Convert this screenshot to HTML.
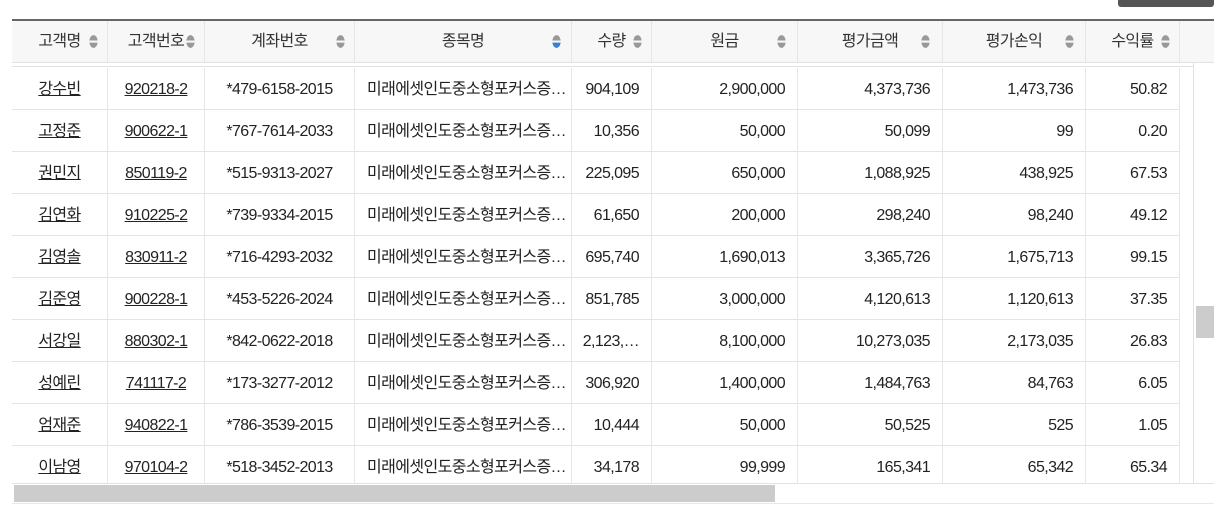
<!DOCTYPE html>
<html><head><meta charset="utf-8"><style>
*{margin:0;padding:0;box-sizing:border-box}
body{width:1224px;height:521px;background:#fff;font-family:"Liberation Sans","Noto Sans CJK KR",sans-serif;color:#222;position:relative;overflow:hidden;font-size:16px;letter-spacing:-0.6px}
.btn{position:absolute;left:1118px;top:-4px;width:96px;height:11px;background:#555;border-radius:3px}
.top{position:absolute;left:12px;top:19px;width:1202px;height:2px;background:#666}
.hdr{position:absolute;left:12px;top:21px;width:1202px;height:42px;background:#f7f7f7;border-bottom:1px solid #e2e2e2}
.hc{position:absolute;top:0;height:41px;line-height:42px;text-align:center;border-right:1px solid #e6e6e6;color:#333}
.ic{position:absolute;top:12px;width:9px;height:17px}
.sep{position:absolute;left:12px;top:66px;width:1182px;height:1px;background:#e2e2e2}
.row{position:absolute;left:12px;width:1168px;height:42px;border-bottom:1px solid #e4e4e4}
.c{position:absolute;top:0;height:41px;line-height:43px;border-right:1px solid #e6e6e6;white-space:nowrap;overflow:hidden}
.u{text-decoration:underline;text-align:center}
.ctr{text-align:center}
.l{padding-left:12px;text-overflow:ellipsis}
.r{text-align:right;padding-right:12px}
.vs{position:absolute;left:1193px;top:63px;width:21px;height:420px;border-left:1px solid #e2e2e2}
.vt{position:absolute;left:1196px;top:306px;width:18px;height:32px;background:#ccc}
.hs{position:absolute;left:12px;top:483px;width:1202px;height:21px;border-top:1px solid #e2e2e2;border-bottom:1px solid #e8e8e8}
.ht{position:absolute;left:14px;top:485px;width:761px;height:17px;background:#ccc}
.clip{position:absolute;left:0;top:67px;width:1224px;height:416px;overflow:hidden}
</style></head><body>
<div class="btn"></div>
<div class="top"></div>
<div class="hdr">
<div class="hc" style="left:0;width:96px">고객명</div>
<div class="hc" style="left:96px;width:97px">고객번호</div>
<div class="hc" style="left:193px;width:150px">계좌번호</div>
<div class="hc" style="left:343px;width:217px">종목명</div>
<div class="hc" style="left:560px;width:80px">수량</div>
<div class="hc" style="left:640px;width:146px">원금</div>
<div class="hc" style="left:786px;width:145px">평가금액</div>
<div class="hc" style="left:931px;width:143px">평가손익</div>
<div class="hc" style="left:1074px;width:94px">수익률</div>
<svg class="ic" style="left:77px" viewBox="0 0 8 16"><path d="M0 7L1 4Q4 0 7 4L8 7Z" fill="#999"/><path d="M0 9L8 9L7 12Q4 16 1 12Z" fill="#999"/></svg>
<svg class="ic" style="left:174px" viewBox="0 0 8 16"><path d="M0 7L1 4Q4 0 7 4L8 7Z" fill="#999"/><path d="M0 9L8 9L7 12Q4 16 1 12Z" fill="#999"/></svg>
<svg class="ic" style="left:324px" viewBox="0 0 8 16"><path d="M0 7L1 4Q4 0 7 4L8 7Z" fill="#999"/><path d="M0 9L8 9L7 12Q4 16 1 12Z" fill="#999"/></svg>
<svg class="ic" style="left:540px" viewBox="0 0 8 16"><path d="M0 7L1 4Q4 0 7 4L8 7Z" fill="#999"/><path d="M0 9L8 9L7 12Q4 16 1 12Z" fill="#3a7fd5"/></svg>
<svg class="ic" style="left:621px" viewBox="0 0 8 16"><path d="M0 7L1 4Q4 0 7 4L8 7Z" fill="#999"/><path d="M0 9L8 9L7 12Q4 16 1 12Z" fill="#999"/></svg>
<svg class="ic" style="left:765px" viewBox="0 0 8 16"><path d="M0 7L1 4Q4 0 7 4L8 7Z" fill="#999"/><path d="M0 9L8 9L7 12Q4 16 1 12Z" fill="#999"/></svg>
<svg class="ic" style="left:909px" viewBox="0 0 8 16"><path d="M0 7L1 4Q4 0 7 4L8 7Z" fill="#999"/><path d="M0 9L8 9L7 12Q4 16 1 12Z" fill="#999"/></svg>
<svg class="ic" style="left:1053px" viewBox="0 0 8 16"><path d="M0 7L1 4Q4 0 7 4L8 7Z" fill="#999"/><path d="M0 9L8 9L7 12Q4 16 1 12Z" fill="#999"/></svg>
<svg class="ic" style="left:1149px" viewBox="0 0 8 16"><path d="M0 7L1 4Q4 0 7 4L8 7Z" fill="#999"/><path d="M0 9L8 9L7 12Q4 16 1 12Z" fill="#999"/></svg>
</div>
<div class="sep"></div>
<div class="vs"></div><div class="vt"></div>
<div class="hs"></div><div class="ht"></div>
<div class="clip">
<div class="row" style="top:1px"><div class="c u" style="left:0;width:96px">강수빈</div><div class="c u" style="left:96px;width:97px">920218-2</div><div class="c ctr" style="left:193px;width:150px">*479-6158-2015</div><div class="c l" style="left:343px;width:217px">미래에셋인도중소형포커스증…</div><div class="c r" style="left:560px;width:80px">904,109</div><div class="c r" style="left:640px;width:146px">2,900,000</div><div class="c r" style="left:786px;width:145px">4,373,736</div><div class="c r" style="left:931px;width:143px">1,473,736</div><div class="c r" style="left:1074px;width:94px">50.82</div></div>
<div class="row" style="top:43px"><div class="c u" style="left:0;width:96px">고정준</div><div class="c u" style="left:96px;width:97px">900622-1</div><div class="c ctr" style="left:193px;width:150px">*767-7614-2033</div><div class="c l" style="left:343px;width:217px">미래에셋인도중소형포커스증…</div><div class="c r" style="left:560px;width:80px">10,356</div><div class="c r" style="left:640px;width:146px">50,000</div><div class="c r" style="left:786px;width:145px">50,099</div><div class="c r" style="left:931px;width:143px">99</div><div class="c r" style="left:1074px;width:94px">0.20</div></div>
<div class="row" style="top:85px"><div class="c u" style="left:0;width:96px">권민지</div><div class="c u" style="left:96px;width:97px">850119-2</div><div class="c ctr" style="left:193px;width:150px">*515-9313-2027</div><div class="c l" style="left:343px;width:217px">미래에셋인도중소형포커스증…</div><div class="c r" style="left:560px;width:80px">225,095</div><div class="c r" style="left:640px;width:146px">650,000</div><div class="c r" style="left:786px;width:145px">1,088,925</div><div class="c r" style="left:931px;width:143px">438,925</div><div class="c r" style="left:1074px;width:94px">67.53</div></div>
<div class="row" style="top:127px"><div class="c u" style="left:0;width:96px">김연화</div><div class="c u" style="left:96px;width:97px">910225-2</div><div class="c ctr" style="left:193px;width:150px">*739-9334-2015</div><div class="c l" style="left:343px;width:217px">미래에셋인도중소형포커스증…</div><div class="c r" style="left:560px;width:80px">61,650</div><div class="c r" style="left:640px;width:146px">200,000</div><div class="c r" style="left:786px;width:145px">298,240</div><div class="c r" style="left:931px;width:143px">98,240</div><div class="c r" style="left:1074px;width:94px">49.12</div></div>
<div class="row" style="top:169px"><div class="c u" style="left:0;width:96px">김영솔</div><div class="c u" style="left:96px;width:97px">830911-2</div><div class="c ctr" style="left:193px;width:150px">*716-4293-2032</div><div class="c l" style="left:343px;width:217px">미래에셋인도중소형포커스증…</div><div class="c r" style="left:560px;width:80px">695,740</div><div class="c r" style="left:640px;width:146px">1,690,013</div><div class="c r" style="left:786px;width:145px">3,365,726</div><div class="c r" style="left:931px;width:143px">1,675,713</div><div class="c r" style="left:1074px;width:94px">99.15</div></div>
<div class="row" style="top:211px"><div class="c u" style="left:0;width:96px">김준영</div><div class="c u" style="left:96px;width:97px">900228-1</div><div class="c ctr" style="left:193px;width:150px">*453-5226-2024</div><div class="c l" style="left:343px;width:217px">미래에셋인도중소형포커스증…</div><div class="c r" style="left:560px;width:80px">851,785</div><div class="c r" style="left:640px;width:146px">3,000,000</div><div class="c r" style="left:786px;width:145px">4,120,613</div><div class="c r" style="left:931px;width:143px">1,120,613</div><div class="c r" style="left:1074px;width:94px">37.35</div></div>
<div class="row" style="top:253px"><div class="c u" style="left:0;width:96px">서강일</div><div class="c u" style="left:96px;width:97px">880302-1</div><div class="c ctr" style="left:193px;width:150px">*842-0622-2018</div><div class="c l" style="left:343px;width:217px">미래에셋인도중소형포커스증…</div><div class="c r" style="left:560px;width:80px">2,123,…</div><div class="c r" style="left:640px;width:146px">8,100,000</div><div class="c r" style="left:786px;width:145px">10,273,035</div><div class="c r" style="left:931px;width:143px">2,173,035</div><div class="c r" style="left:1074px;width:94px">26.83</div></div>
<div class="row" style="top:295px"><div class="c u" style="left:0;width:96px">성예린</div><div class="c u" style="left:96px;width:97px">741117-2</div><div class="c ctr" style="left:193px;width:150px">*173-3277-2012</div><div class="c l" style="left:343px;width:217px">미래에셋인도중소형포커스증…</div><div class="c r" style="left:560px;width:80px">306,920</div><div class="c r" style="left:640px;width:146px">1,400,000</div><div class="c r" style="left:786px;width:145px">1,484,763</div><div class="c r" style="left:931px;width:143px">84,763</div><div class="c r" style="left:1074px;width:94px">6.05</div></div>
<div class="row" style="top:337px"><div class="c u" style="left:0;width:96px">엄재준</div><div class="c u" style="left:96px;width:97px">940822-1</div><div class="c ctr" style="left:193px;width:150px">*786-3539-2015</div><div class="c l" style="left:343px;width:217px">미래에셋인도중소형포커스증…</div><div class="c r" style="left:560px;width:80px">10,444</div><div class="c r" style="left:640px;width:146px">50,000</div><div class="c r" style="left:786px;width:145px">50,525</div><div class="c r" style="left:931px;width:143px">525</div><div class="c r" style="left:1074px;width:94px">1.05</div></div>
<div class="row" style="top:379px"><div class="c u" style="left:0;width:96px">이남영</div><div class="c u" style="left:96px;width:97px">970104-2</div><div class="c ctr" style="left:193px;width:150px">*518-3452-2013</div><div class="c l" style="left:343px;width:217px">미래에셋인도중소형포커스증…</div><div class="c r" style="left:560px;width:80px">34,178</div><div class="c r" style="left:640px;width:146px">99,999</div><div class="c r" style="left:786px;width:145px">165,341</div><div class="c r" style="left:931px;width:143px">65,342</div><div class="c r" style="left:1074px;width:94px">65.34</div></div>
</div>
</body></html>
